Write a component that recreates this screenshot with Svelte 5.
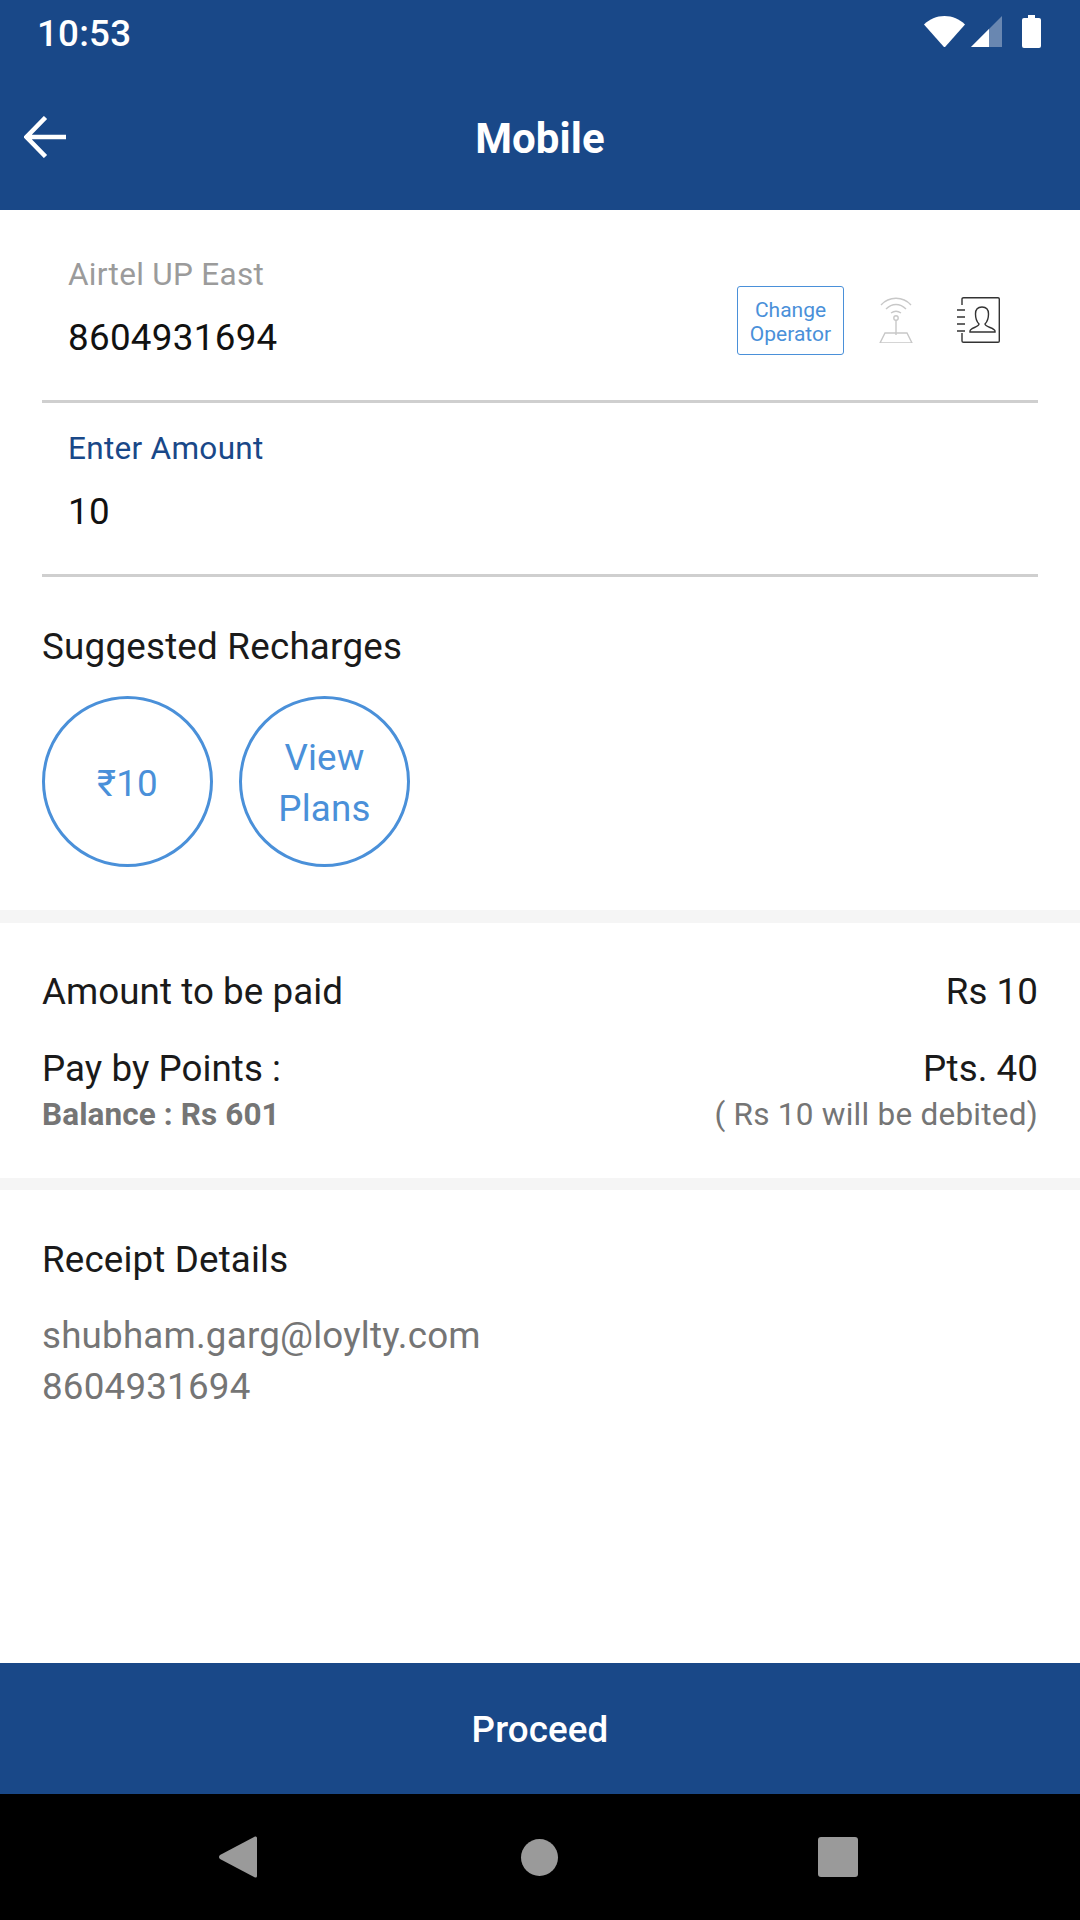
<script>
  const suggestions = ["₹10", "View Plans"];
</script>

<div class="app">
  <header class="top">
    <div class="status">
      <span class="time">10:53</span>
      <div class="status-icons">
        <svg width="41" height="31" viewBox="0 0 41 31"><path d="M0 8.5C5.500 3.200 12.500 0 20.500 0S35.500 3.200 41 8.500L21.500 30.500Q20.500 31.500 19.500 30.500Z" fill="#fff" /></svg>
        <svg width="31" height="31" viewBox="0 0 31 31"><path d="M31 0V31H0Z" fill="#fff" fill-opacity="0.35" /><path d="M18 13V31H0Z" fill="#fff" /></svg>
        <svg width="19" height="33" viewBox="0 0 19 33"><path d="M6 0H13V3H17Q19 3 19 5V31Q19 33 17 33H2Q0 33 0 31V5Q0 3 2 3H6Z" fill="#fff" /></svg>
      </div>
    </div>
    <div class="toolbar">
      <svg class="back" width="42" height="42" viewBox="0 0 42 42" fill="none" stroke="#fff" stroke-width="4.500"><path d="M42 21H3M21.500 1.500L2.500 21L21.500 40.500" /></svg>
      <h1>Mobile</h1>
    </div>
  </header>

  <main>
    <section class="form">
      <div class="field operator">
        <div>
          <div class="label">Airtel UP East</div>
          <div class="value">8604931694</div>
        </div>
        <div class="actions">
          <button class="change">Change<br />Operator</button>
          <svg class="tower" width="34" height="46" viewBox="0 0 34 46" fill="none" stroke="#c8c8c8" stroke-width="1.400">
            <path d="M2 8C10 -1 24 -1 32 8M7 12C13 6 21 6 27 12M12 16C15 14 19 14 22 16" />
            <circle cx="17" cy="21" r="2.200" />
            <path d="M17 23V38M6 36H28L33 46H1ZM1 46H33" />
          </svg>
          <svg class="contact" width="43" height="46" viewBox="0 0 43 46" fill="none" stroke="#333" stroke-width="1.400">
            <path d="M5 8V2Q5 .7 6.500 .7H41Q42.300 .7 42.300 2V44Q42.300 45.300 41 45.300H6.500Q5 45.300 5 44V36" />
            <path d="M0 13H8M0 20H8M0 27H8M0 34H8" />
            <path d="M13 35V34C13 31 22 30 22 27C19 24 18.500 20 18.500 17C18.500 12 21 10 25 10S31.500 12 31.500 17C31.500 20 31 24 28 27C28 30 38 31 38 34V35Z" />
          </svg>
        </div>
      </div>
      <div class="field amount">
        <div class="label blue">Enter Amount</div>
        <div class="value">10</div>
      </div>
      <h2>Suggested Recharges</h2>
      <div class="chips">
        {#each suggestions as s}
          <div class="chip">{s}</div>
        {/each}
      </div>
    </section>

    <section class="pay">
      <div class="row first">
        <span>Amount to be paid</span>
        <span>Rs 10</span>
      </div>
      <div class="row">
        <span>Pay by Points :</span>
        <span>Pts. 40</span>
      </div>
      <div class="row sub">
        <b>Balance : Rs 601</b>
        <span>( Rs 10 will be debited)</span>
      </div>
    </section>

    <section class="receipt">
      <h3>Receipt Details</h3>
      <p>shubham.garg@loylty.com<br />8604931694</p>
    </section>
  </main>

  <button class="proceed">Proceed</button>

  <nav>
    <svg width="38" height="42" viewBox="0 0 38 42"><path d="M36 .5Q38 0 38 2V40Q38 42 36 41.500L1 23Q-1 21 1 19Z" fill="#9a9a9a" /></svg>
    <div class="home"></div>
    <div class="recent"></div>
  </nav>
</div>

<style>
  :global(body) {
    margin: 0;
    background: #fff;
  }

  .app {
    width: 1080px;
    height: 1920px;
    display: flex;
    flex-direction: column;
    font-family: Roboto, "Noto Sans", sans-serif;
    color: #1a1a1a;
  }

  .top {
    background: #194888;
    color: #fff;
  }

  .status {
    height: 63px;
    display: flex;
    align-items: center;
    justify-content: space-between;
    padding: 0 39px 0 37px;
  }

  .time {
    font-size: 36.750px;
    font-weight: 500;
    letter-spacing: 0.2px;
    position: relative;
    top: 2px;
  }

  .status-icons {
    display: flex;
    align-items: center;
    gap: 6px;
  }

  .status-icons svg:last-child {
    margin-left: 14px;
  }

  .toolbar {
    height: 147px;
    display: flex;
    align-items: center;
    justify-content: center;
    position: relative;
  }

  .back {
    position: absolute;
    left: 24px;
    top: 53px;
  }

  h1 {
    margin: 0;
    font-size: 42px;
    font-weight: 700;
    letter-spacing: 0.1px;
    position: relative;
    top: 2px;
  }

  main {
    flex: 1;
    display: flex;
    flex-direction: column;
  }

  .form {
    padding: 0 42px;
    height: 700px;
    box-sizing: border-box;
  }

  .field {
    border-bottom: 3px solid #cfcfcf;
    padding-left: 26px;
    box-sizing: border-box;
  }

  .operator {
    height: 192.500px;
    padding-top: 45px;
    display: flex;
    justify-content: space-between;
  }

  .amount {
    height: 174.500px;
    padding-top: 26px;
  }

  .label {
    font-size: 31.500px;
    line-height: 40px;
    letter-spacing: 0.3px;
    color: #9b9b9b;
  }

  .blue {
    color: #194888;
  }

  .value {
    font-size: 36.750px;
    line-height: 44px;
    letter-spacing: 0.3px;
    margin-top: 21px;
    color: #111;
  }

  .actions {
    display: flex;
    align-items: flex-start;
    padding-top: 31px;
    padding-right: 38px;
  }

  .change {
    width: 107px;
    height: 69px;
    padding: 2px 0 0;
    border: 1.300px solid #4a90d9;
    border-radius: 3px;
    background: #fff;
    color: #4a90d9;
    font: 21px/24px Roboto, sans-serif;
  }

  .tower {
    margin-left: 35px;
    margin-top: 11px;
  }

  .contact {
    margin-left: 44px;
    margin-top: 11px;
  }

  h2 {
    margin: 48px 0 0;
    font-size: 36.750px;
    font-weight: 400;
    line-height: 44px;
    letter-spacing: 0.22px;
  }

  .chips {
    display: flex;
    gap: 26px;
    margin-top: 27px;
  }

  .chip {
    width: 171px;
    height: 171px;
    box-sizing: border-box;
    border: 3px solid #4a90d9;
    border-radius: 50%;
    display: flex;
    align-items: center;
    justify-content: center;
    padding: 3px 30px 0;
    text-align: center;
    color: #4a90d9;
    font-size: 36.750px;
    line-height: 51px;
    letter-spacing: 0.2px;
  }

  .pay {
    border-top: 13px solid #f5f5f5;
    border-bottom: 12px solid #f5f5f5;
    padding: 47px 42px 0;
    height: 280px;
    box-sizing: border-box;
  }

  .row {
    display: flex;
    justify-content: space-between;
    font-size: 36.750px;
    line-height: 44px;
    letter-spacing: 0.05px;
  }

  .first {
    margin-bottom: 33px;
  }

  .sub {
    font-size: 31.500px;
    line-height: 36px;
    color: #757575;
    margin-top: 6px;
    letter-spacing: 0.25px;
  }

  .sub b {
    letter-spacing: 0.1px;
  }

  .receipt {
    padding: 48px 42px 0;
  }

  h3 {
    margin: 0;
    font-size: 36.750px;
    font-weight: 400;
    line-height: 44px;
    letter-spacing: 0.15px;
  }

  p {
    margin: 28px 0 0;
    font-size: 36.750px;
    line-height: 51px;
    letter-spacing: 0.2px;
    color: #757575;
  }

  .proceed {
    height: 131px;
    flex: none;
    border: 0;
    padding: 2px 0 0;
    background: #194888;
    color: #fff;
    font: 500 36.750px Roboto, sans-serif;
    letter-spacing: 0.1px;
  }

  nav {
    height: 126px;
    flex: none;
    background: #000;
    display: grid;
    grid-template-columns: 302px 297px 40px;
    align-items: center;
    padding-left: 219px;
  }

  .home {
    width: 37px;
    height: 37px;
    border-radius: 50%;
    background: #9a9a9a;
  }

  .recent {
    width: 40px;
    height: 40px;
    border-radius: 3px;
    background: #9a9a9a;
  }
</style>
